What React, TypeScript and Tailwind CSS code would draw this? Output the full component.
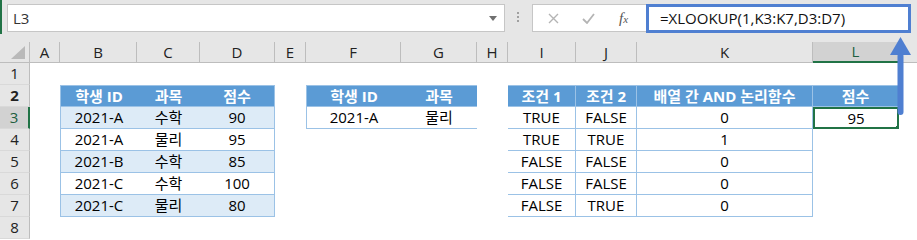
import React from 'react'

const font = "font-['Open_Sans','Noto_Sans_CJK_KR',sans-serif]"

const colWidths = [30, 30, 77, 63, 75, 31, 95, 76, 31, 68, 61, 176, 86]
const letters = ['A', 'B', 'C', 'D', 'E', 'F', 'G', 'H', 'I', 'J', 'K', 'L']

const scores = [
  { id: '2021-A', subject: '수학', score: '90' },
  { id: '2021-A', subject: '물리', score: '95' },
  { id: '2021-B', subject: '수학', score: '85' },
  { id: '2021-C', subject: '수학', score: '100' },
  { id: '2021-C', subject: '물리', score: '80' },
]

const conditions = [
  ['TRUE', 'FALSE', '0'],
  ['TRUE', 'TRUE', '1'],
  ['FALSE', 'FALSE', '0'],
  ['FALSE', 'FALSE', '0'],
  ['FALSE', 'TRUE', '0'],
]

function Cell({ w, className, children }: { w: number; className?: string; children?: React.ReactNode }) {
  return (
    <div
      style={{ width: w }}
      className={`flex h-full shrink-0 items-center justify-center overflow-hidden whitespace-nowrap ${className || ''}`}
    >
      {children}
    </div>
  )
}

function RowHeader({ n, active }: { n: number; active?: boolean }) {
  return (
    <div
      className={`flex h-full w-[30px] shrink-0 items-center justify-center border-b border-[#d9d9d9] text-[15px] ${
        active
          ? 'border-r-2 border-r-[#217346] bg-[#d2d2d2] text-[#215f3e]'
          : 'border-r border-r-[#bdbdbd] bg-[#e6e6e6] text-[#222]'
      }`}
    >
      {n}
    </div>
  )
}

function FormulaBar() {
  return (
    <div className="relative flex h-[42px] items-start bg-[#e6e6e6] pt-[4px]">
      <div className="absolute left-0 top-0 h-[34px] w-[2px] bg-[#217346]" />
      <div className="ml-[7px] flex h-[28px] w-[498px] items-center justify-between border border-[#c6c6c6] bg-white pl-[5px] pr-[7px]">
        <span className="text-[15px] text-[#333]">L3</span>
        <svg width="8" height="5" viewBox="0 0 8 5">
          <path d="M0 0h8L4 5z" fill="#707070" />
        </svg>
      </div>
      <div className="ml-[12px] mt-[8px] flex flex-col gap-[2px]">
        <div className="h-[2px] w-[2px] bg-[#a0a0a0]" />
        <div className="h-[2px] w-[2px] bg-[#a0a0a0]" />
        <div className="h-[2px] w-[2px] bg-[#a0a0a0]" />
      </div>
      <div className="ml-[13px] flex h-[28px] w-[114px] items-center border border-r-0 border-[#c6c6c6] bg-white pl-[15px]">
        <svg width="11" height="11" viewBox="0 0 11 11">
          <path d="M1 1l9 9M10 1l-9 9" stroke="#b4b4b4" strokeWidth="1.4" />
        </svg>
        <svg className="ml-[23px]" width="13" height="11" viewBox="0 0 13 11">
          <path d="M1 6l4 4 7-9" stroke="#b4b4b4" strokeWidth="1.8" fill="none" />
        </svg>
        <span className="ml-[24px] font-['Liberation_Serif',serif] text-[15px] italic text-[#555]">
          f<span className="text-[11px]">x</span>
        </span>
      </div>
      <div className="flex h-[29px] w-[265px] items-center border-[3px] border-[#4f7fd1] bg-white pl-[11px] text-[15px] text-[#111]">
        =XLOOKUP(1,K3:K7,D3:D7)
      </div>
    </div>
  )
}

function ColumnHeaders() {
  return (
    <div className="flex h-[21px] bg-[#e6e6e6] text-[15px] text-[#222]">
      <div className="relative h-full w-[30px] shrink-0 border-b border-r border-[#bdbdbd]">
        <svg className="absolute bottom-[3px] right-[4px]" width="14" height="13" viewBox="0 0 14 13">
          <path d="M14 0v13H0z" fill="#b9b9b9" />
        </svg>
      </div>
      {letters.map((l, i) =>
        l === 'L' ? (
          <Cell key={l} w={colWidths[i + 1]} className="border-b-2 border-r border-b-[#217346] border-r-[#bdbdbd] bg-[#d2d2d2] text-[#215f3e]">
            {l}
          </Cell>
        ) : (
          <Cell key={l} w={colWidths[i + 1]} className="border-b border-r border-[#bdbdbd]">
            {l}
          </Cell>
        )
      )}
      <div className="h-full flex-1 border-b border-[#bdbdbd]" />
    </div>
  )
}

export default function App() {
  const w = colWidths
  return (
    <div className={`relative h-[240px] w-[917px] overflow-hidden bg-white ${font}`}>
      <FormulaBar />
      <ColumnHeaders />

      {/* row 1 */}
      <div className="flex h-[22px]">
        <RowHeader n={1} />
      </div>

      {/* row 2: headers */}
      <div className="flex h-[22px] text-[15px] font-bold text-white">
        <RowHeader n={2} />
        <Cell w={w[1]} />
        <Cell w={w[2]} className="border-y border-l border-[#9bc2e6] bg-[#5b9bd5]">학생 ID</Cell>
        <Cell w={w[3]} className="border-y border-[#9bc2e6] bg-[#5b9bd5]">과목</Cell>
        <Cell w={w[4]} className="border-y border-r border-[#9bc2e6] bg-[#5b9bd5]">점수</Cell>
        <Cell w={w[5]} />
        <Cell w={w[6]} className="border-y border-l border-[#9bc2e6] bg-[#5b9bd5]">학생 ID</Cell>
        <Cell w={w[7]} className="border-y border-[#9bc2e6] bg-[#5b9bd5]">과목</Cell>
        <Cell w={w[8]} />
        <Cell w={w[9]} className="border-y border-r border-[#9bc2e6] bg-[#5b9bd5]">조건 1</Cell>
        <Cell w={w[10]} className="border-y border-r border-[#9bc2e6] bg-[#5b9bd5]">조건 2</Cell>
        <Cell w={w[11]} className="border-y border-r border-[#9bc2e6] bg-[#5b9bd5]">배열 간 AND 논리함수</Cell>
        <Cell w={w[12]} className="border-y border-r border-[#9bc2e6] bg-[#5b9bd5]">점수</Cell>
      </div>

      {/* rows 3-7 */}
      {scores.map((s, i) => {
        const fill = i % 2 === 0 ? 'bg-[#ddebf7]' : 'bg-white'
        const c = conditions[i]
        return (
          <div key={i} className="flex h-[22px] text-[15px] text-black">
            <RowHeader n={i + 3} active={i === 0} />
            <Cell w={w[1]} />
            <Cell w={w[2]} className={`border-b border-l border-[#9bc2e6] ${fill}`}>{s.id}</Cell>
            <Cell w={w[3]} className={`border-b border-[#9bc2e6] ${fill}`}>{s.subject}</Cell>
            <Cell w={w[4]} className={`border-b border-r border-[#9bc2e6] ${fill}`}>{s.score}</Cell>
            <Cell w={w[5]} />
            {i === 0 ? (
              <>
                <Cell w={w[6]} className="border-b border-l border-[#9bc2e6]">2021-A</Cell>
                <Cell w={w[7]} className="border-b border-[#9bc2e6]">물리</Cell>
              </>
            ) : (
              <>
                <Cell w={w[6]} />
                <Cell w={w[7]} />
              </>
            )}
            <Cell w={w[8]} />
            <Cell w={w[9]} className="border-b border-r border-[#9bc2e6]">{c[0]}</Cell>
            <Cell w={w[10]} className="border-b border-r border-[#9bc2e6]">{c[1]}</Cell>
            <Cell w={w[11]} className="border-b border-r border-[#9bc2e6]">{c[2]}</Cell>
            {i === 0 ? (
              <Cell w={w[12]} className="relative border-2 border-[#217346]">
                95
                <div className="absolute bottom-[-3px] right-[-3px] h-[5px] w-[5px] border border-white bg-[#217346]" />
              </Cell>
            ) : (
              <Cell w={w[12]} />
            )}
          </div>
        )
      })}

      {/* row 8 */}
      <div className="flex h-[22px]">
        <RowHeader n={8} />
      </div>

      {/* arrow from L3 up to the formula */}
      <svg className="absolute left-[888px] top-[35px]" width="26" height="82" viewBox="0 0 26 82">
        <path d="M2 20L12.5 2L23 20z" fill="#4f7fd1" />
        <rect x="9.5" y="18" width="6" height="62" rx="3" fill="#4f7fd1" />
      </svg>
    </div>
  )
}
